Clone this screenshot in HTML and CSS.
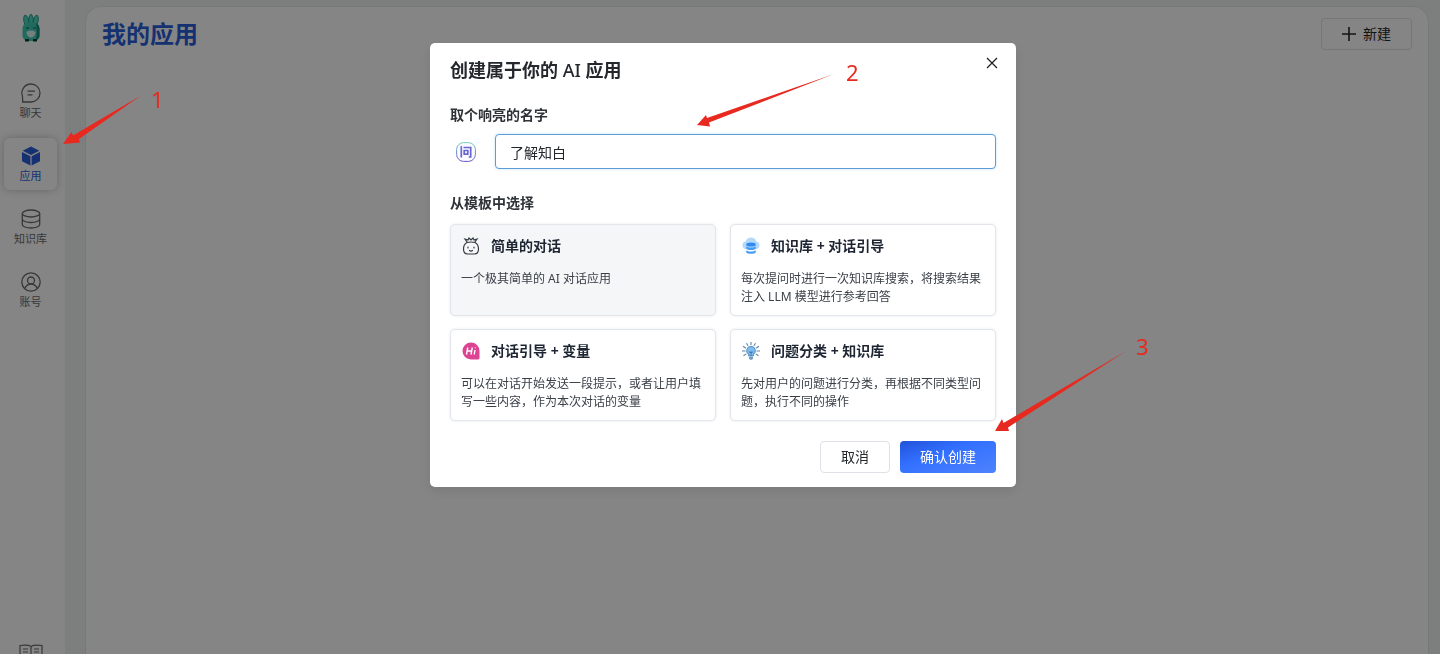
FILE: index.html
```
<!DOCTYPE html>
<html lang="zh-CN">
<head>
<meta charset="utf-8">
<meta name="viewport" content="width=device-width, initial-scale=1">
<title>我的应用</title>
<link rel="stylesheet" href="styles.css">
</head>
<body>
<div class="app">
  <nav class="sidebar" aria-label="主导航">
    <svg class="logo" viewBox="0 0 20 28" aria-hidden="true">
      <path d="M5 12C2 8 2 3 4 1c3 1 4 5 4 9zM15 12c3-4 3-9 1-11-3 1-4 5-4 9zM8 10C7 5 8 2 10 0c2 2 3 5 2 10z" fill="#4fd8c0" stroke="#178f80" stroke-width=".8"/>
      <path d="M1.500 15c0-5 3.500-7 8.500-7s8.500 2 8.500 7v6c0 4-2.500 6-8.500 6s-8.500-2-8.500-6z" fill="#3fcdb5"/>
      <path d="M15 9c2 1 3.500 3 3.500 6v6c0 3-1 4-3.500 5 1-5 1-12 0-17z" fill="#168c7b"/>
      <path d="M5.500 18c2-2 7-2 9 0 0 3-2 5.500-4.500 5.500S5.500 21 5.500 18z" fill="#dff5f0"/>
      <path d="M5 14h3M12 14h3" stroke="#0c5f55" stroke-width="1.200"/>
      <path d="M4 25h4v2.500H4zM12 25h4v2.500h-4z" fill="#083d38"/>
    </svg>
    <a class="nav-item" href="#chat">
      <svg class="nav-icon" viewBox="0 0 20 20" aria-hidden="true"><path d="M10 1a9 9 0 1 1 0 18H1.700l-.2-5.800A9 9 0 0 1 10 1zM6.500 8.200h7.500M6.500 11.800h5"/></svg>
      <span>聊天</span>
    </a>
    <a class="nav-item nav-item-active" href="#apps" aria-current="page">
      <svg class="nav-icon nav-icon-solid" viewBox="0 0 20 20" aria-hidden="true"><path d="M10 .5l8.300 4.200L10 9 1.700 4.700zM1 6l8.400 4.300v9.200L1 15.200zM19 6l-8.400 4.300v9.200l8.400-4.300z"/></svg>
      <span>应用</span>
    </a>
    <a class="nav-item" href="#datasets">
      <svg class="nav-icon" viewBox="0 0 20 20" aria-hidden="true"><ellipse cx="10" cy="4.500" rx="8.700" ry="3.500"/><path d="M1.300 4.500v11c0 2 4 3.500 8.700 3.500s8.700-1.500 8.700-3.500v-11M1.300 10c0 2 4 3.500 8.700 3.500s8.700-1.500 8.700-3.500"/></svg>
      <span>知识库</span>
    </a>
    <a class="nav-item" href="#account">
      <svg class="nav-icon" viewBox="0 0 20 20" aria-hidden="true"><circle cx="10" cy="10" r="9.200"/><circle cx="10" cy="8.500" r="3.500"/><path d="M3.600 16.500c1.500-3 3.700-4.500 6.400-4.500s4.900 1.500 6.400 4.500"/></svg>
      <span>账号</span>
    </a>
    <a class="docs-link" href="#docs" aria-label="文档">
      <svg class="docs-icon" viewBox="0 0 24 20" aria-hidden="true"><path d="M12 2.500C10 1 5 1 1 1.500v15c4-.5 9-.5 11 1 2-1.500 7-1.500 11-1v-15C19 1 14 1 12 2.500zm0 0v15M4 5h5M4 8h5M15 5h5M15 8h5"/></svg>
    </a>
  </nav>
  <main class="page">
    <section class="panel">
      <header class="panel-header">
        <h1 class="page-title">我的应用</h1>
        <button class="button button-new" type="button">
          <svg class="plus" viewBox="0 0 14 14" aria-hidden="true"><path d="M7 0v14M0 7h14"/></svg>
          新建
        </button>
      </header>
    </section>
  </main>
</div>

<div class="overlay">
  <form class="modal" role="dialog" aria-modal="true" aria-labelledby="modal-title">
    <header class="modal-header">
      <h2 class="modal-title" id="modal-title">创建属于你的 <span class="latin">AI</span> 应用</h2>
      <button class="close" type="button" aria-label="关闭">
        <svg class="close-icon" viewBox="0 0 10 10" aria-hidden="true"><path d="M0 0l10 10M10 0L0 10"/></svg>
      </button>
    </header>
    <label class="label" for="app-name">取个响亮的名字</label>
    <div class="name-row">
      <button class="avatar" type="button" aria-label="选择头像">
        <svg class="avatar-icon" viewBox="0 0 20 20" aria-hidden="true">
          <defs><linearGradient id="ring" x1="0" y1="0" x2="0" y2="1"><stop stop-color="#79cdbb"/><stop offset="1" stop-color="#6558c8"/></linearGradient></defs>
          <rect x=".6" y=".6" width="18.800" height="18.800" rx="7" fill="#fbfaff" stroke="url(#ring)"/>
          <path d="M5.300 6v9.500M7.500 5.500h7.200V15h-2M4.500 4.500l1.500 1M8.200 8.500h3.600v3.700H8.200z" fill="none" stroke="#6668cf" stroke-width="1.700"/>
        </svg>
      </button>
      <input class="name-input" id="app-name" type="text" value="了解知白">
    </div>
    <h3 class="label">从模板中选择</h3>
    <div class="templates">
      <button class="card card-selected" type="button" aria-pressed="true">
        <span class="card-head">
          <svg class="card-icon" viewBox="0 0 18 18" aria-hidden="true"><g fill="none" stroke="#343942" stroke-width="1.200" stroke-linecap="round"><path d="M5 5.500C3 6.500 1.500 8.500 1.500 12c0 3.500 1.500 5 4 5h7c2.500 0 4-1.500 4-5 0-3.500-1.500-5.500-3.500-6.500C11 5 7 5 5 5.500zM5 5L3 2l3 1 1-2 2 2 2-2 1 2 3-1-2 3M6 10v1M12 10v1M7.500 13.500c1 .8 2 .8 3 0"/></g></svg>
          <span class="card-title">简单的对话</span>
        </span>
        <span class="card-text">一个极其简单的 AI 对话应用</span>
      </button>
      <button class="card" type="button" aria-pressed="false">
        <span class="card-head">
          <svg class="card-icon" viewBox="0 0 18 18" aria-hidden="true"><path d="M4 12a3.800 3.800 0 0 1-.5-7.500 5.800 5.800 0 0 1 11 0A3.800 3.800 0 0 1 14 12z" fill="#b5d9fb"/><ellipse cx="9" cy="7.500" rx="4.800" ry="2" fill="#318af0"/><path d="M4.200 9.300c2 1.700 7.600 1.700 9.600 0v2.200c-1 2-8.600 2-9.600 0zM4.200 13.200c2 1.700 7.600 1.700 9.600 0v2c-1 2.200-8.600 2.200-9.600 0z" fill="#459df5"/></svg>
          <span class="card-title">知识库 + 对话引导</span>
        </span>
        <span class="card-text">每次提问时进行一次知识库搜索，将搜索结果注入 LLM 模型进行参考回答</span>
      </button>
      <button class="card" type="button" aria-pressed="false">
        <span class="card-head">
          <svg class="card-icon" viewBox="0 0 18 18" aria-hidden="true"><path d="M9 .5a8.500 8.500 0 0 1 8.500 8.500v6.500c0 1.500-.5 2-2 2H9A8.500 8.500 0 0 1 9 .5z" fill="#dc4393"/><path d="M5.800 5.500l-1.300 7M10.300 5.500l-1.300 7M5.200 9h4.400M13 8l-.8 4.500M13.300 5.500v.8" fill="none" stroke="#fff" stroke-width="1.400"/></svg>
          <span class="card-title">对话引导 + 变量</span>
        </span>
        <span class="card-text">可以在对话开始发送一段提示，或者让用户填写一些内容，作为本次对话的变量</span>
      </button>
      <button class="card" type="button" aria-pressed="false">
        <span class="card-head">
          <svg class="card-icon" viewBox="0 0 18 18" aria-hidden="true"><path d="M9 0v3M4.500 1.200l1.600 2.600M13.500 1.200l-1.600 2.600M1 4.300l3 1.900M17 4.300l-3 1.900M0 9h3.500M18 9h-3.500M1.500 13.700l2.800-1.800M16.500 13.700l-2.800-1.800" stroke="#5d86aa" stroke-width="1.100"/><path d="M9 4.300a4.400 4.400 0 0 0-2.500 8v1.500h5v-1.500A4.400 4.400 0 0 0 9 4.300z" fill="#7dbcf0" stroke="#4d83b5" stroke-width=".9"/><path d="M7.300 9.500l1 1.500.7-1.500.7 1.500 1-1.500M9 11v3" fill="none" stroke="#326da7" stroke-width=".8"/><path d="M7 14.500h4v1.800l-1 1.500H8l-1-1.500z" fill="#6f9fc9"/></svg>
          <span class="card-title">问题分类 + 知识库</span>
        </span>
        <span class="card-text">先对用户的问题进行分类，再根据不同类型问题，执行不同的操作</span>
      </button>
    </div>
    <footer class="modal-footer">
      <button class="button" type="button">取消</button>
      <button class="button button-primary" type="submit">确认创建</button>
    </footer>
  </form>
</div>

<svg class="annotations" aria-hidden="true">
  <g class="arrow">
    <path d="M141 95.500L79 139l1 3.500L63 144l8.500-12 1.500 3.500z"/>
    <path d="M834 74L709 122.500l1 4-13-1.500 9-10 1 3z"/>
    <path d="M1126 351l-118 76.500 1 3.500-14 0 7-12 1.500 4z"/>
  </g>
  <text x="151" y="108">1</text>
  <text x="846" y="81">2</text>
  <text x="1136" y="355">3</text>
</svg>
</body>
</html>
```

FILE: styles.css
```
* {
  box-sizing: border-box;
}

body {
  margin: 0;
  height: 100vh;
  overflow: hidden;
  color: #24282c;
  font-family: "Noto Sans", "Noto Sans CJK SC", sans-serif;
  font-size: 14px;
  line-height: 20px;
}

h1,
h2,
h3 {
  margin: 0;
}

button,
input {
  font: inherit;
  color: inherit;
}

.app {
  display: flex;
  height: 100%;
  background: #eff3f3;
}

.sidebar {
  display: flex;
  flex-direction: column;
  gap: 11px;
  width: 65px;
  padding: 14px 8px 0 4px;
  overflow: hidden;
  background: #fff;
}

.logo {
  flex: none;
  align-self: center;
  width: 20px;
  height: 28px;
  margin-bottom: 22px;
}

.nav-item {
  display: flex;
  flex: none;
  flex-direction: column;
  align-items: center;
  gap: 2px;
  height: 52px;
  padding-top: 8px;
  border-radius: 6px;
  color: #6b6b70;
  font-size: 11px;
  line-height: 16px;
  text-decoration: none;
}

.nav-item-active {
  background: #fff;
  box-shadow: 0 0 8px #c4c4c4;
  color: #2f63e0;
}

.nav-icon {
  width: 20px;
  height: 20px;
  fill: none;
  stroke: #6b6b70;
  stroke-width: 1.3;
}

.nav-icon-solid {
  fill: #2b5fd9;
  stroke: none;
}

.docs-link {
  flex: none;
  align-self: center;
  height: 10px;
  margin-top: auto;
  overflow: hidden;
}

.docs-icon {
  width: 24px;
  height: 20px;
  fill: none;
  stroke: #6b6b70;
  stroke-width: 1.2;
}

.page {
  flex: 1;
  padding: 6px 11px 0 20px;
}

.panel {
  height: 100%;
  padding: 11px 16px;
  border: 1px solid #e2e6e8;
  border-bottom: 0;
  border-radius: 16px 16px 0 0;
  background: #fff;
}

.panel-header {
  display: flex;
  align-items: center;
  justify-content: space-between;
}

.page-title {
  color: #2b5fd9;
  font-size: 24px;
  line-height: 32px;
}

.button {
  display: flex;
  align-items: center;
  height: 32px;
  padding: 0 20px;
  border: 1px solid #dee2e8;
  border-radius: 4px;
  background: #fff;
}

.button-new {
  gap: 7px;
}

.plus {
  width: 14px;
  height: 14px;
  stroke: #24282c;
  stroke-width: 1.6;
}

.overlay {
  position: fixed;
  inset: 0;
  display: flex;
  align-items: flex-start;
  justify-content: center;
  padding: 43px 0 0 6px;
  background: rgba(0, 0, 0, 0.48);
}

.modal {
  width: 586px;
  max-width: 100%;
  padding: 15px 20px 14px;
  border-radius: 5px;
  background: #fff;
  box-shadow: 0 4px 12px rgba(0, 0, 0, 0.1);
}

.modal-header {
  display: flex;
  align-items: flex-start;
  justify-content: space-between;
  margin-bottom: 23px;
}

.modal-title {
  font-size: 18px;
  line-height: 24px;
}

.latin {
  font-weight: 500;
}

.close {
  display: flex;
  width: 10px;
  height: 10px;
  margin-right: -1px;
  padding: 0;
  border: 0;
  background: none;
}

.close-icon {
  width: 10px;
  height: 10px;
  overflow: visible;
  stroke: #222;
  stroke-width: 1.3;
}

.label {
  display: block;
  color: #2f3338;
  font-size: 14px;
  font-weight: 600;
  line-height: 20px;
}

.name-row {
  display: flex;
  align-items: center;
  gap: 13px;
  margin: 9px 0 24px;
}

.avatar {
  display: flex;
  align-items: center;
  justify-content: center;
  width: 32px;
  height: 32px;
  padding: 0;
  border: 0;
  background: none;
}

.avatar-icon {
  width: 20px;
  height: 20px;
}

.name-input {
  flex: 1;
  height: 35px;
  padding: 0 14px;
  border: 1px solid #5f9bd6;
  border-radius: 4px;
  outline: none;
  box-shadow: 0 0 3px #bfe3fa;
}

.templates {
  display: grid;
  grid-template-columns: 1fr 1fr;
  gap: 13px 14px;
  margin: 11px 0 20px;
}

.card {
  display: flex;
  flex-direction: column;
  gap: 14px;
  height: 92px;
  padding: 11px 10px;
  border: 1px solid #e2e5e9;
  border-radius: 5px;
  background: #fff;
  box-shadow: 0 0 3px #e8eaee;
  text-align: left;
}

.card-selected {
  background: #f4f6f8;
}

.card-head {
  display: flex;
  align-items: center;
  gap: 11px;
  padding-left: 1px;
}

.card-icon {
  width: 18px;
  height: 18px;
}

.card-title {
  color: #1d2532;
  font-weight: 700;
}

.card-text {
  color: #3b4048;
  font-size: 12px;
  line-height: 18px;
}

.modal-footer {
  display: flex;
  justify-content: flex-end;
  gap: 10px;
}

.button-primary {
  border: 0;
  background: linear-gradient(to bottom right, #2152d9, #3370ff 40%, #4e83fd);
  color: #fff;
}

.annotations {
  position: absolute;
  top: 0;
  left: 0;
  width: 100%;
  height: 100%;
  fill: #e8291f;
  font-size: 22px;
  pointer-events: none;
}
```
